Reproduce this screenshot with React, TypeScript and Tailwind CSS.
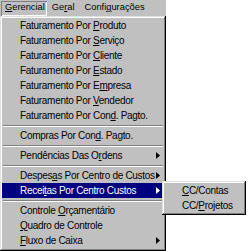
import React from "react";

type Item =
  | { sep: true }
  | { sep?: false; pre: string; key: string; post: string; sub?: boolean; active?: boolean };

const items: Item[] = [
  { pre: "Faturamento Por ", key: "P", post: "roduto" },
  { pre: "Faturamento Por ", key: "S", post: "erviço" },
  { pre: "Faturamento Por ", key: "C", post: "liente" },
  { pre: "Faturamento Por ", key: "E", post: "stado" },
  { pre: "Faturamento Por E", key: "m", post: "presa" },
  { pre: "Faturamento Por ", key: "V", post: "endedor" },
  { pre: "Faturamento Por Con", key: "d", post: ". Pagto." },
  { sep: true },
  { pre: "Compras Por Con", key: "d", post: ". Pagto." },
  { sep: true },
  { pre: "Pendências Das O", key: "r", post: "dens", sub: true },
  { sep: true },
  { pre: "Despes", key: "a", post: "s Por Centro de Custos", sub: true },
  { pre: "Recei", key: "t", post: "as Por Centro Custos", sub: true, active: true },
  { sep: true },
  { pre: "Controle ", key: "O", post: "rçamentário" },
  { pre: "", key: "Q", post: "uadro de Controle" },
  { pre: "", key: "F", post: "luxo de Caixa", sub: true },
];

const bevel =
  "shadow-[inset_-1px_-1px_#000,inset_1px_1px_#dfdfdf,inset_-2px_-2px_#808080,inset_2px_2px_#fff]";

const Arrow = ({ white }: { white?: boolean }) => (
  <svg width="4" height="7" viewBox="0 0 4 7" className="shrink-0">
    <path d="M0 0 L4 3.5 L0 7 Z" fill={white ? "#fff" : "#000"} />
  </svg>
);

export default function App() {
  return (
    <div
      className="relative w-[250px] h-[251px] bg-white text-[10px] tracking-[-0.3px] text-black leading-none overflow-hidden"
      style={{ fontFamily: '"Liberation Sans", Arial, sans-serif' }}
    >
      <div className="w-[166px] flex flex-col">
        {/* menu bar */}
        <div className="h-[16px] bg-[#c0c0c0] flex items-center text-[9.3px] tracking-normal">
          <div className="h-[15px] ml-[1px] pl-[4px] pr-[2px] flex items-center shadow-[inset_1px_1px_#808080,inset_-1px_-1px_#fff]">
            <span className="underline underline-offset-1">G</span>erencial
          </div>
          <div className="pl-[5px] flex items-center">
            Ge<span className="underline underline-offset-1">r</span>al
          </div>
          <div className="pl-[10px] flex items-center">
            Confi<span className="underline underline-offset-1">g</span>urações
          </div>
        </div>

        {/* dropdown */}
        <div className={`bg-[#c0c0c0] ${bevel} p-[2px] h-[235px] flex flex-col`}>
          {items.map((it, i) =>
            it.sep ? (
              <div key={i} className="h-[5px] flex flex-col justify-center px-[1px]">
                <div className="h-px bg-[#808080]" />
                <div className="h-px bg-white" />
              </div>
            ) : (
              <div
                key={i}
                className={`h-[15px] flex items-center pl-[18px] pr-[4px] ${
                  it.active ? "bg-[#000080] text-white" : ""
                }`}
              >
                <span className="flex-1 whitespace-nowrap">
                  {it.pre}
                  <span className="underline underline-offset-1">{it.key}</span>
                  {it.post}
                </span>
                {it.sub && <Arrow white={it.active} />}
              </div>
            )
          )}
        </div>
      </div>

      {/* submenu */}
      <div
        className={`absolute left-[162px] top-[181px] w-[84px] h-[34px] bg-[#c0c0c0] ${bevel} p-[2px] flex flex-col`}
      >
        <div className="h-[15px] flex items-center pl-[18px]">
          <span className="underline underline-offset-1">C</span>C/Contas
        </div>
        <div className="h-[15px] flex items-center pl-[18px]">
          CC/<span className="underline underline-offset-1">P</span>rojetos
        </div>
      </div>
    </div>
  );
}
